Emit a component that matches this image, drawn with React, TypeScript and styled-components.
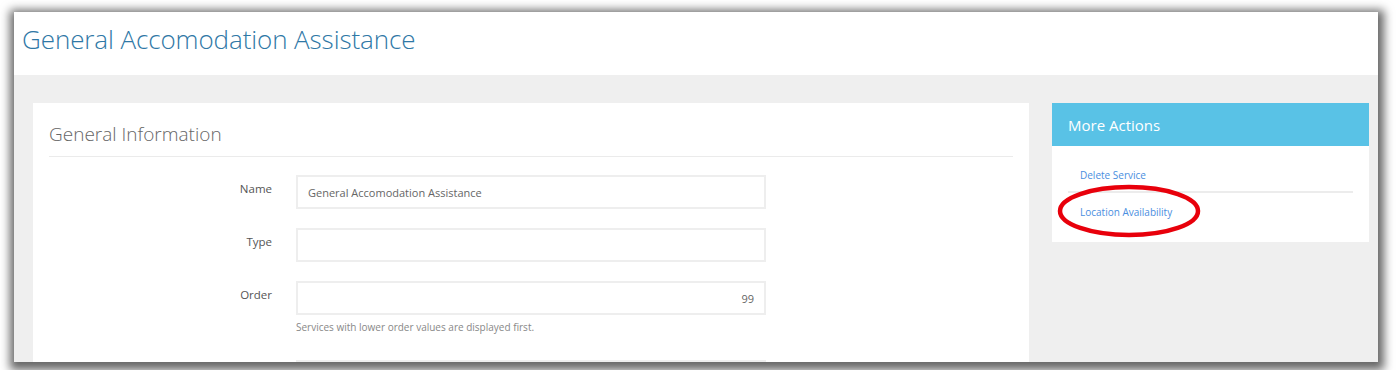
import React from 'react';
import styled, { createGlobalStyle } from 'styled-components';

const GlobalStyle = createGlobalStyle`
  html, body {
    margin: 0;
    padding: 0;
    background: #fff;
    font-family: 'Open Sans', 'Liberation Sans', sans-serif;
  }
  * {
    box-sizing: border-box;
  }
`;

const Page = styled.div`
  width: 1396px;
  height: 370px;
  padding: 12px 18px 8px 14px;
  overflow: hidden;
`;

const Frame = styled.div`
  height: 350px;
  background: #efefef;
  box-shadow: 1px 3px 9px 5px rgba(0, 0, 0, 0.6);
  display: flex;
  flex-direction: column;
  overflow: hidden;
`;

const Header = styled.header`
  height: 63px;
  flex-shrink: 0;
  background: #fff;
  padding: 9px 8px 0;
`;

const PageTitle = styled.h1`
  margin: 0;
  font-size: 26px;
  font-weight: 300;
  color: #2f78a6;
  letter-spacing: -0.1px;
`;

const Main = styled.main`
  flex: 1;
  display: flex;
  align-items: flex-start;
  gap: 23px;
  padding: 28px 9px 0 19px;
`;

const Card = styled.section`
  width: 996px;
  background: #fff;
  padding: 0 16px 40px;
`;

const CardTitle = styled.h2`
  margin: 0;
  height: 54px;
  display: flex;
  align-items: center;
  padding-top: 8px;
  font-size: 19px;
  font-weight: 300;
  color: #666;
  border-bottom: 1px solid #ebebeb;
`;

const Form = styled.form`
  padding-top: 18px;
  display: flex;
  flex-direction: column;
  gap: 19px;
`;

const Row = styled.div`
  display: grid;
  grid-template-columns: 223px 470px;
  column-gap: 24px;
`;

const Label = styled.label`
  text-align: right;
  font-size: 11.5px;
  color: #555;
  padding-top: 6px;
`;

const Field = styled.div`
  display: flex;
  flex-direction: column;
`;

const Input = styled.input<{ $align?: 'left' | 'right' }>`
  height: 34px;
  width: 100%;
  border: 2px solid #eeeeee;
  padding: 0 10px;
  font-family: inherit;
  font-size: 11px;
  color: #666;
  text-align: ${(p) => p.$align || 'left'};
  background: #fff;
  outline: none;
`;

const Help = styled.span`
  margin: 5px 0 7px;
  font-size: 10px;
  color: #888;
`;

const Sidebar = styled.aside`
  width: 317px;
  background: #fff;
`;

const PanelHeading = styled.div`
  height: 43px;
  background: #59c2e6;
  color: #fff;
  font-size: 15px;
  display: flex;
  align-items: center;
  padding: 1px 16px 0;
`;

const PanelBody = styled.ul`
  position: relative;
  list-style: none;
  margin: 0;
  padding: 10px 16px 14px;
`;

const ActionItem = styled.li<{ $divider?: boolean }>`
  line-height: 16px;
  padding: 9px 12px 8px;
  border-bottom: ${(p) => (p.$divider ? '2px solid #ececec' : 'none')};
`;

const ActionLink = styled.a`
  font-size: 10px;
  color: #4a8ee0;
  text-decoration: none;
`;

// red annotation circle drawn over the second action
const Highlight = styled.svg`
  position: absolute;
  left: 5px;
  top: 38px;
  pointer-events: none;
`;

export default function App() {
  return (
    <>
      <GlobalStyle />
      <Page>
        <Frame>
          <Header>
            <PageTitle>General Accomodation Assistance</PageTitle>
          </Header>
          <Main>
            <Card>
              <CardTitle>General Information</CardTitle>
              <Form>
                <Row>
                  <Label>Name</Label>
                  <Field>
                    <Input defaultValue="General Accomodation Assistance" />
                  </Field>
                </Row>
                <Row>
                  <Label>Type</Label>
                  <Field>
                    <Input />
                  </Field>
                </Row>
                <Row>
                  <Label>Order</Label>
                  <Field>
                    <Input $align="right" defaultValue="99" />
                    <Help>Services with lower order values are displayed first.</Help>
                  </Field>
                </Row>
                <Row>
                  <Label />
                  <Field>
                    <Input />
                  </Field>
                </Row>
              </Form>
            </Card>
            <Sidebar>
              <PanelHeading>More Actions</PanelHeading>
              <PanelBody>
                <ActionItem $divider>
                  <ActionLink href="#">Delete Service</ActionLink>
                </ActionItem>
                <ActionItem>
                  <ActionLink href="#">Location Availability</ActionLink>
                </ActionItem>
                <Highlight width="144" height="54" viewBox="0 0 144 54">
                  <ellipse cx="72" cy="27" rx="69" ry="24" fill="none" stroke="#e8000b" strokeWidth="4.5" />
                </Highlight>
              </PanelBody>
            </Sidebar>
          </Main>
        </Frame>
      </Page>
    </>
  );
}
